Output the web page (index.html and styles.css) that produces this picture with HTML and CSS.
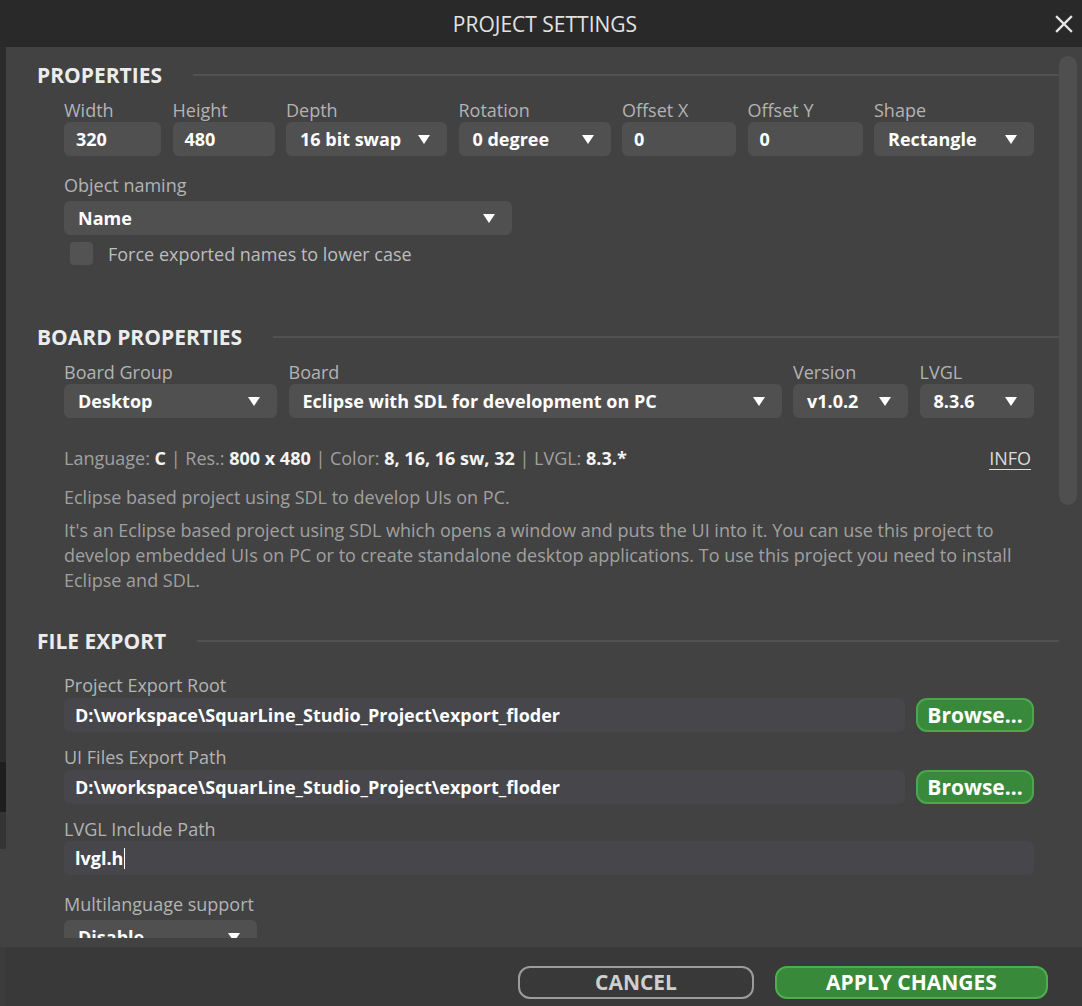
FILE: index.html
```html
<!DOCTYPE html>
<html lang="en">
<head>
<meta charset="utf-8">
<title>Project Settings</title>
<link rel="stylesheet" href="styles.css">
</head>
<body>
<div class="window">
  <header class="titlebar">
    <span class="title">PROJECT SETTINGS</span>
    <button class="close" aria-label="Close">
      <svg width="18" height="18" viewBox="0 0 18 18"><path d="M2 2 L16 16 M16 2 L2 16" stroke="#e6e6e6" stroke-width="2.4" stroke-linecap="square" fill="none"/></svg>
    </button>
  </header>

  <div class="strip">
    <div class="s1"></div><div class="s2"></div><div class="s3"></div><div class="s4"></div><div class="s5"></div>
  </div>

  <main class="body">
    <div class="content">
      <h2 class="section-head">PROPERTIES</h2>
      <div class="fields">
        <div class="grid7">
          <div class="field"><label>Width</label><div class="control">320</div></div>
          <div class="field"><label>Height</label><div class="control">480</div></div>
          <div class="field"><label>Depth</label><div class="control select"><span>16 bit swap</span><i class="arrow"></i></div></div>
          <div class="field"><label>Rotation</label><div class="control select"><span>0 degree</span><i class="arrow"></i></div></div>
          <div class="field"><label>Offset X</label><div class="control">0</div></div>
          <div class="field"><label>Offset Y</label><div class="control">0</div></div>
          <div class="field"><label>Shape</label><div class="control select"><span>Rectangle</span><i class="arrow"></i></div></div>
        </div>
        <div class="field naming"><label>Object naming</label><div class="control select"><span>Name</span><i class="arrow"></i></div></div>
        <div class="check-row"><span class="checkbox"></span><span>Force exported names to lower case</span></div>
      </div>

      <h2 class="section-head board-head">BOARD PROPERTIES</h2>
      <div class="fields">
        <div class="grid4">
          <div class="field"><label>Board Group</label><div class="control select"><span>Desktop</span><i class="arrow"></i></div></div>
          <div class="field"><label>Board</label><div class="control select"><span>Eclipse with SDL for development on PC</span><i class="arrow"></i></div></div>
          <div class="field"><label>Version</label><div class="control select"><span>v1.0.2</span><i class="arrow"></i></div></div>
          <div class="field"><label>LVGL</label><div class="control select"><span>8.3.6</span><i class="arrow"></i></div></div>
        </div>
        <div class="info-line">
          <span>Language: <b>C</b> | Res.: <b>800 x 480</b> | Color: <b>8, 16, 16 sw, 32</b> | LVGL: <b>8.3.*</b></span>
          <a class="info-link">INFO</a>
        </div>
        <p class="desc">Eclipse based project using SDL to develop UIs on PC.</p>
        <p class="desc long">It's an Eclipse based project using SDL which opens a window and puts the UI into it. You can use this project to develop embedded UIs on PC or to create standalone desktop applications. To use this project you need to install Eclipse and SDL.</p>
      </div>

      <h2 class="section-head export-head">FILE EXPORT</h2>
      <div class="fields">
        <div class="field path-field first"><label>Project Export Root</label>
          <div class="path-row"><div class="control path">D:\workspace\SquarLine_Studio_Project\export_floder</div><button class="browse">Browse...</button></div>
        </div>
        <div class="field path-field"><label>UI Files Export Path</label>
          <div class="path-row"><div class="control path">D:\workspace\SquarLine_Studio_Project\export_floder</div><button class="browse">Browse...</button></div>
        </div>
        <div class="field path-field"><label>LVGL Include Path</label>
          <div class="control path">lvgl.h<span class="caret"></span></div>
        </div>
        <div class="field multilang"><label>Multilanguage support</label>
          <div class="control select"><span>Disable</span><i class="arrow"></i></div>
        </div>
      </div>
    </div>
    <div class="scrolltrack"><div class="thumb"></div></div>
  </main>

  <footer class="footer">
    <button class="btn cancel">CANCEL</button>
    <button class="btn apply">APPLY CHANGES</button>
  </footer>
</div>
</body>
</html>
```

FILE: styles.css
```css
* { box-sizing: border-box; }

html, body {
  margin: 0;
  padding: 0;
}

body {
  width: 1082px;
  height: 1006px;
  overflow: hidden;
  background: #424242;
  font-family: "Open Sans", "Noto Sans", sans-serif;
}

.window {
  display: grid;
  grid-template-columns: 6px 1fr;
  grid-template-rows: 47px 900px 59px;
  height: 1006px;
}

/* title bar */
.titlebar {
  grid-column: 1 / 3;
  background: #292929;
  display: grid;
  grid-template-columns: 1fr auto 1fr;
  align-items: center;
}
.title {
  grid-column: 2;
  color: #e2e2e2;
  font-size: 21px;
  padding-left: 8px;
}
.close {
  grid-column: 3;
  justify-self: end;
  margin-right: 9px;
  background: none;
  border: 0;
  padding: 0;
  width: 18px;
  height: 18px;
  display: flex;
}

/* left backdrop strip */
.strip {
  grid-row: 2 / 4;
  display: flex;
  flex-direction: column;
}
.s1 { height: 715px; background: #2b2b2b; }
.s2 { height: 50px; background: #1e1e1e; }
.s3 { height: 37px; background: #343434; }
.s4 { height: 98px; background: #424242; }
.s5 { flex: 1; background: #3c3c3c; }

/* body */
.body {
  background: #424242;
  display: flex;
  align-items: flex-start;
  overflow: hidden;
}
.content {
  flex: 1;
  height: 891px;
  overflow: hidden;
  padding: 14px 0 0 31px;
}
.scrolltrack {
  width: 18px;
  margin: 9px 5px 0 0;
}
.thumb {
  height: 449px;
  background: #4f4f4f;
  border-radius: 9px;
}

.section-head {
  margin: 0;
  height: 28px;
  display: flex;
  align-items: center;
  gap: 31px;
  font-size: 21px;
  font-weight: 700;
  color: #ececec;
  white-space: nowrap;
}
.section-head::after {
  content: "";
  flex: 1;
  height: 2px;
  background: #525252;
}
.board-head { margin-top: 58px; }
.export-head { margin-top: 34px; }

.fields {
  padding: 0 25px 0 27px;
}

.field label {
  display: block;
  font-size: 18px;
  line-height: 20px;
  color: #b3b3b3;
  white-space: nowrap;
}

.control {
  margin-top: 2px;
  height: 34px;
  border-radius: 6px;
  background: #505050;
  display: flex;
  align-items: center;
  padding: 0 12px;
  font-size: 18px;
  font-weight: 700;
  color: #ffffff;
  white-space: nowrap;
}
.select {
  justify-content: space-between;
  padding: 0 17px 0 14px;
}
.arrow {
  width: 0;
  height: 0;
  border-left: 6px solid transparent;
  border-right: 6px solid transparent;
  border-top: 9px solid #ffffff;
}

.grid7 {
  margin-top: 11px;
  display: grid;
  grid-template-columns: 97px 102px 161px 152px 114px 115px 1fr;
  column-gap: 11.5px;
}
.naming {
  margin-top: 19px;
  width: 448px;
}
.naming .control { margin-top: 6px; }
.check-row {
  margin-top: 7px;
  padding-left: 6px;
  display: flex;
  align-items: center;
  gap: 15px;
  font-size: 18px;
  color: #bdbdbd;
  height: 23px;
}
.checkbox {
  width: 23px;
  height: 23px;
  border-radius: 4px;
  background: #535353;
}

.grid4 {
  margin-top: 11px;
  display: grid;
  grid-template-columns: 213px 493px 115px 1fr;
  column-gap: 11.5px;
}

.info-line {
  margin-top: 28px;
  display: flex;
  justify-content: space-between;
  font-size: 18px;
  line-height: 25px;
  color: #a0a0a0;
}
.info-line b {
  color: #f4f4f4;
  font-weight: 700;
}
.info-link {
  color: #dcdcdc;
  text-decoration: underline;
  text-underline-offset: 4px;
  text-decoration-thickness: 1px;
  margin-right: 3px;
}
.desc {
  margin: 14px 0 0;
  font-size: 18px;
  line-height: 25px;
  color: #a0a0a0;
}
.desc.long { margin-top: 8px; }

.path-field { margin-top: 15px; }
.path-field.first { margin-top: 20px; }
.path-row {
  display: flex;
  gap: 11px;
  margin-top: 3px;
}
.path-row .control { margin-top: 0; }
.path {
  flex: 1;
  background: #46464b;
  padding: 0 11px;
}
.caret {
  display: inline-block;
  width: 1px;
  height: 21px;
  background: #ffffff;
  margin-left: 1px;
}
.browse {
  width: 118px;
  height: 34px;
  border-radius: 11px;
  background: #388a3a;
  border: 2px solid #4aa84c;
  color: #ffffff;
  font-family: inherit;
  font-size: 21px;
  font-weight: 700;
  padding: 0;
}

.multilang {
  margin-top: 19px;
  width: 193px;
}
.multilang .control { margin-top: 6px; }

/* footer */
.footer {
  background: #393939;
  display: flex;
  justify-content: flex-end;
  align-items: flex-start;
  gap: 21px;
  padding: 19px 34px 0 0;
}
.btn {
  height: 33px;
  border-radius: 12px;
  font-family: inherit;
  font-size: 21px;
  font-weight: 700;
  padding: 0;
  line-height: 1;
}
.cancel {
  width: 236px;
  background: transparent;
  border: 2px solid #9c9c9c;
  color: #cfcfcf;
}
.apply {
  width: 273px;
  background: #388a3a;
  border: 2px solid #4caf4f;
  color: #ffffff;
}
```
